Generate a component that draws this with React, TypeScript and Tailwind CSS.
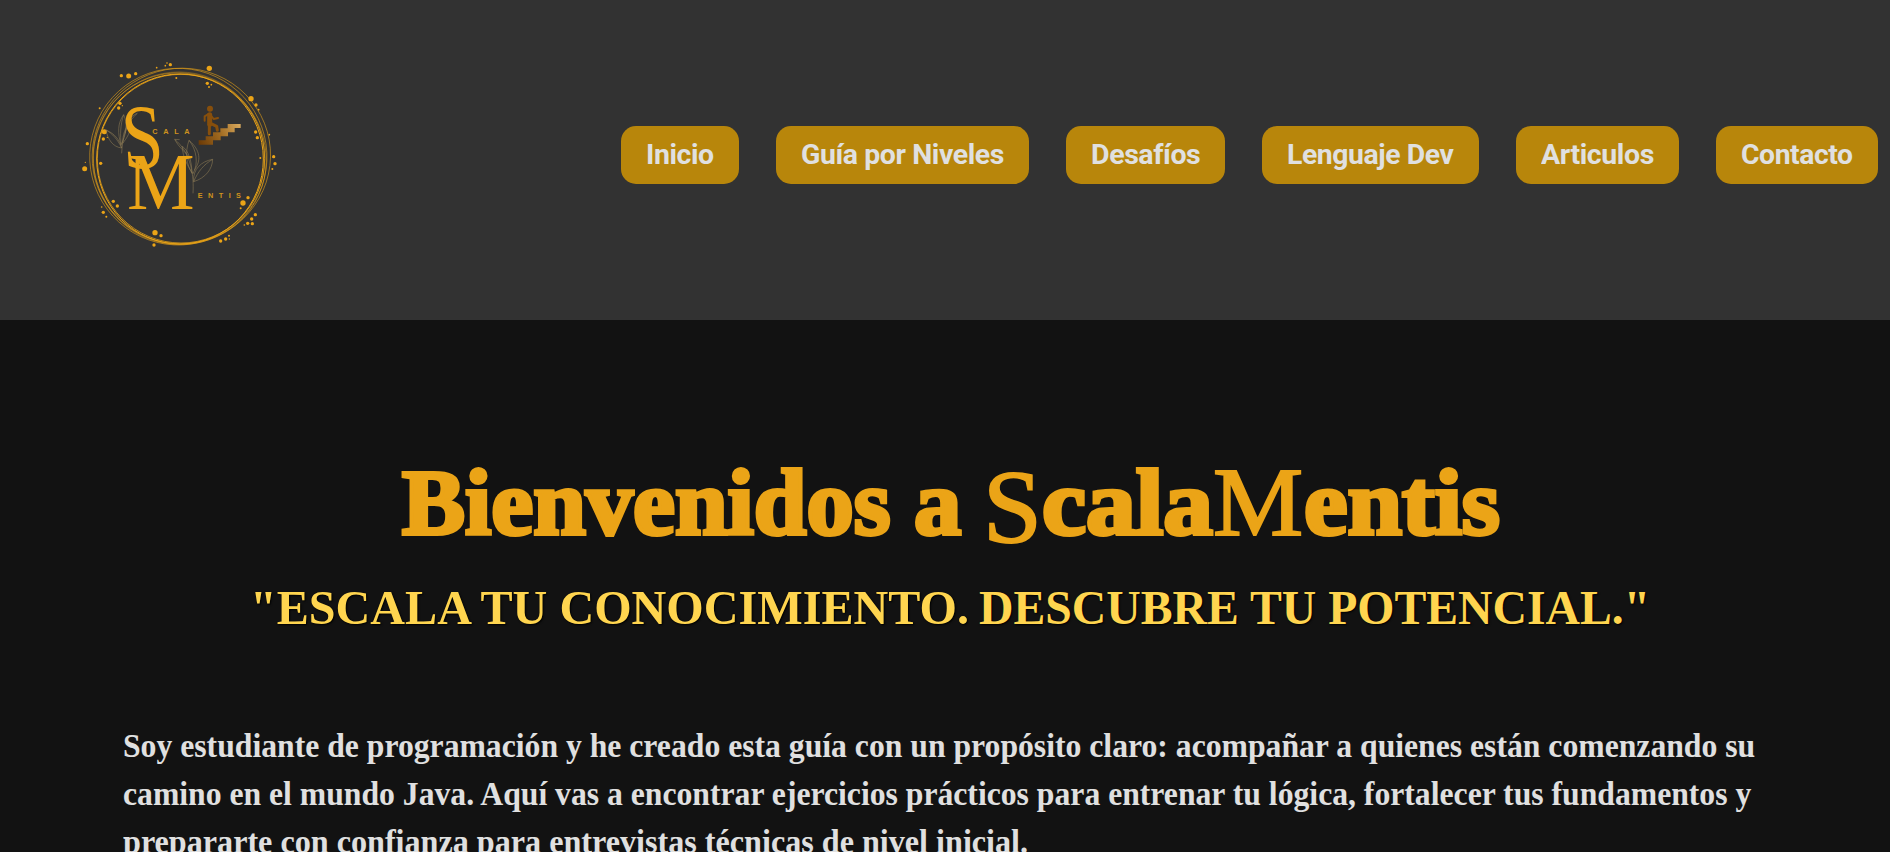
import { useLayoutEffect, useRef, useState } from "react";
import type { ReactNode } from "react";

type FitProps = { width: number; className?: string; children: ReactNode };

/* Sets a run of text to an exact measure by condensing or widening it. */
function Fit({ width, className = "", children }: FitProps) {
  const ref = useRef<HTMLSpanElement>(null);
  const [scale, setScale] = useState(1);
  useLayoutEffect(() => {
    if (ref.current) setScale(width / ref.current.offsetWidth);
  }, [width]);
  return (
    <span className={`block shrink-0 whitespace-nowrap ${className}`} style={{ width }}>
      <span ref={ref} className="inline-block origin-left" style={{ transform: `scaleX(${scale})` }}>
        {children}
      </span>
    </span>
  );
}

const dots: [number, number, number][] = [
  [154, 77, 5], [176, 78, 7.5], [197, 71, 5], [260, 53, 2.5], [286, 47, 2.5], [291, 39, 2.5], [301, 44, 5],
  [418, 55, 8], [319, 84, 3], [412, 100, 5], [424, 104, 2.5], [417, 111, 3], [543, 146, 8], [558, 165, 5],
  [566, 179, 2.5], [150, 160, 5], [146, 174, 5], [157, 167, 2], [89, 175, 3], [103, 245, 7.5], [100, 267, 5],
  [112, 262, 2], [52, 281, 5], [46, 337, 2], [44, 356, 7.5], [92, 340, 5], [557, 246, 5], [562, 263, 5],
  [598, 254, 2.5], [571, 324, 3], [611, 320, 5], [615, 341, 5], [607, 357, 3], [534, 443, 5], [519, 459, 8],
  [512, 475, 3], [556, 494, 5], [545, 507, 5], [533, 520, 5], [547, 521, 5], [523, 525, 2.5], [477, 557, 3],
  [467, 567, 5], [452, 573, 5], [478, 567, 2], [255, 548, 8], [273, 557, 5], [252, 585, 5], [130, 454, 5],
  [142, 468, 5], [95, 471, 2.5], [100, 487, 5], [109, 500, 3],
];

function Logo() {
  return (
    <svg viewBox="0 0 660 630" className="h-[210px] w-[220px]" fill="none" role="img" aria-label="Scala Mentis">
      <defs>
        <linearGradient id="stairs" x1="386" y1="280" x2="512" y2="222" gradientUnits="userSpaceOnUse">
          <stop stopColor="#6b3a06" />
          <stop offset=".5" stopColor="#a06a20" />
          <stop offset="1" stopColor="#d9ab60" />
        </linearGradient>
      </defs>
      <g stroke="#eba417">
        <ellipse cx="330" cy="327" rx="250" ry="255" strokeWidth="3" />
        <ellipse cx="333" cy="326" rx="251" ry="253" strokeWidth="2.5" opacity=".9" />
        <ellipse cx="325" cy="320" rx="266" ry="265" strokeWidth="2" opacity=".8" transform="rotate(14 325 320)" />
        <ellipse cx="334" cy="318" rx="268" ry="263" strokeWidth="2" opacity=".8" transform="rotate(-16 334 318)" />
        <ellipse cx="329" cy="326" rx="261" ry="256" strokeWidth="1.8" opacity=".8" transform="rotate(30 329 326)" />
        <ellipse cx="327" cy="325" rx="257" ry="259" strokeWidth="1.7" opacity=".7" />
      </g>
      <g fill="#eba417">
        {dots.map(([cx, cy, r]) => (
          <circle key={`${cx}-${cy}`} cx={cx} cy={cy} r={r} />
        ))}
      </g>
      <g stroke="#a08a5c" strokeWidth="1.7" opacity=".85">
        <path d="M155 310C157 270 165 220 202 190M153 284C143 250 142 220 161 194C173 220 169 257 153 284ZM155 294C128 291 113 267 108 240C134 251 149 269 155 294ZM158 280C169 266 185 244 182 218C165 230 158 255 158 280ZM166 250C170 220 178 199 202 190M154 286C150 255 151 224 161 194M155 294C143 268 126 250 108 240" />
        <path d="M369 430C372 380 365 310 314 268M369 371C347 345 345 306 357 271C380 299 386 340 369 371ZM371 395C368 357 394 334 428 328C427 358 406 384 371 395ZM373 360C394 332 392 301 357 271M371 395C384 364 402 343 428 328M355 318C345 306 326 291 314 268L329 269M366 370C355 349 337 322 337 289C355 302 365 330 366 370Z" />
      </g>
      <g fill="#eba417" fontFamily="Liberation Serif, serif">
        <text x="0" y="0" fontSize="276" transform="translate(162 355) skewX(4) scale(.8 1)">S</text>
        <text x="0" y="0" fontSize="240" transform="translate(171 476) scale(.95 1)">M</text>
      </g>
      <g fill="#cf931d" fontFamily="Liberation Sans, sans-serif" fontSize="22" fontWeight="700">
        <text x="247" y="251" textLength="112">CALA</text>
        <text x="383" y="443" textLength="130">ENTIS</text>
      </g>
      <path d="M386 284V271H407V259H429V247H451V235H473V222H512V234H494V247H474V259H452V271H429V284Z" fill="url(#stairs)" />
      <circle cx="420" cy="176" r="9" fill="#874f0c" />
      <g stroke="#874f0c" strokeLinecap="round" strokeLinejoin="round">
        <path d="M419 194V223" strokeWidth="15" />
        <path d="M415 192L404 199V212M424 198L431 207L444 204" strokeWidth="6" />
        <path d="M418 221V251M422 220L440 229L442 241" strokeWidth="9" />
      </g>
    </svg>
  );
}

function NavButton({ label, box, text }: { label: string; box: string; text: number }) {
  return (
    <a href="#" className={`flex h-[58px] items-center justify-center rounded-[15px] bg-[#b8860b] ${box}`}>
      <Fit width={text}>{label}</Fit>
    </a>
  );
}

export default function App() {
  return (
    <div className="h-screen overflow-hidden bg-[#121212] font-['Liberation_Serif',serif]">
      <header className="flex h-[320px] items-start justify-between bg-[#323232] pr-[12px] pl-[70px]">
        <div className="pt-[50px]">
          <Logo />
        </div>
        <nav className="flex gap-[37px] pt-[126px] font-['Roboto',sans-serif] text-[28px] leading-[42px] font-bold tracking-[-0.4px] text-[#e0e0e0]">
          <NavButton label="Inicio" box="w-[118px]" text={68} />
          <NavButton label="Guía por Niveles" box="w-[253px]" text={203} />
          <NavButton label="Desafíos" box="w-[159px]" text={109} />
          <NavButton label="Lenguaje Dev" box="w-[217px]" text={167} />
          <NavButton label="Articulos" box="w-[163px]" text={113} />
          <NavButton label="Contacto" box="w-[162px]" text={112} />
        </nav>
      </header>
      <main className="pt-[132px]">
        <h1 className="flex pl-[402px] text-[94px] leading-[100px] font-bold text-[#eba417]">
          <Fit width={559} className="[-webkit-text-stroke:4px_#eba417]">Bienvenidos a</Fit>
          <Fit width={59} className="mt-[5px] -mb-[5px] ml-[22px] text-[104px] font-normal [-webkit-text-stroke:2px_#eba417]">S</Fit>
          <Fit width={171} className="[-webkit-text-stroke:4px_#eba417]">cala</Fit>
          <Fit width={90} className="text-[98px] font-normal [-webkit-text-stroke:2px_#eba417]">M</Fit>
          <Fit width={196} className="ml-px [-webkit-text-stroke:4px_#eba417]">entis</Fit>
        </h1>
        <h2 className="mt-[26px] flex gap-[10px] pl-[250px] text-[48px] leading-[60px] font-bold text-[#ffd54f] uppercase [text-shadow:1px_1px_2px_#000]">
          <Fit width={719}>"Escala tu conocimiento.</Fit>
          <Fit width={671}>Descubre tu potencial."</Fit>
        </h2>
        <p className="mt-[84px] pl-[123px] text-[33px] leading-[48px] font-bold text-[#e0e0e0]">
          <Fit width={1632}>
            Soy estudiante de programación y he creado esta guía con un propósito claro: acompañar a quienes están comenzando su
          </Fit>
          <Fit width={1628}>
            camino en el mundo Java. Aquí vas a encontrar ejercicios prácticos para entrenar tu lógica, fortalecer tus fundamentos y
          </Fit>
          <Fit width={905}>prepararte con confianza para entrevistas técnicas de nivel inicial.</Fit>
        </p>
      </main>
    </div>
  );
}
